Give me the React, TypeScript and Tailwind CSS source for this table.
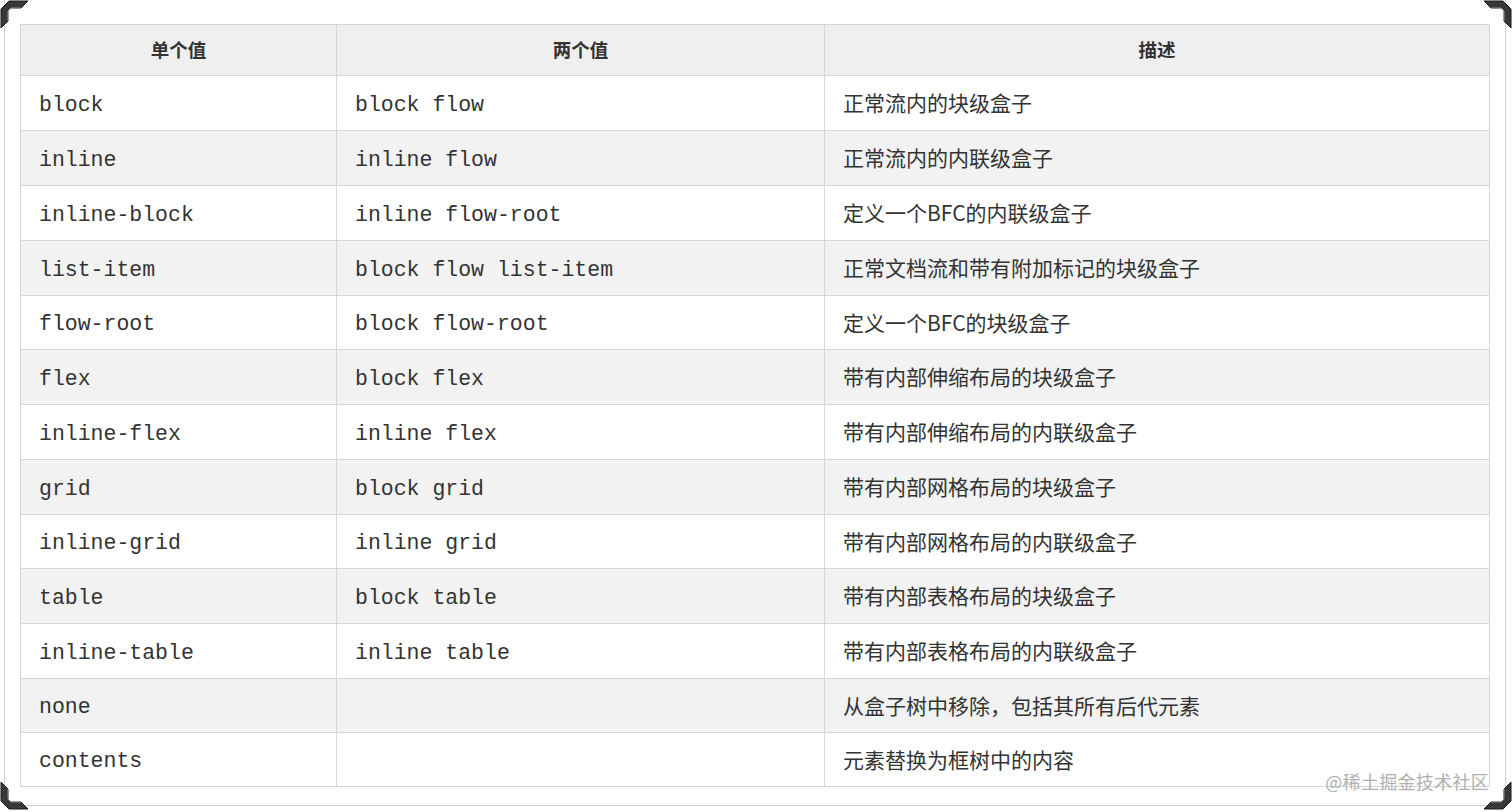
import React from "react";

const rows: [string, string, string][] = [
  ["block", "block flow", "正常流内的块级盒子"],
  ["inline", "inline flow", "正常流内的内联级盒子"],
  ["inline-block", "inline flow-root", "定义一个BFC的内联级盒子"],
  ["list-item", "block flow list-item", "正常文档流和带有附加标记的块级盒子"],
  ["flow-root", "block flow-root", "定义一个BFC的块级盒子"],
  ["flex", "block flex", "带有内部伸缩布局的块级盒子"],
  ["inline-flex", "inline flex", "带有内部伸缩布局的内联级盒子"],
  ["grid", "block grid", "带有内部网格布局的块级盒子"],
  ["inline-grid", "inline grid", "带有内部网格布局的内联级盒子"],
  ["table", "block table", "带有内部表格布局的块级盒子"],
  ["inline-table", "inline table", "带有内部表格布局的内联级盒子"],
  ["none", "", "从盒子树中移除，包括其所有后代元素"],
  ["contents", "", "元素替换为框树中的内容"],
];

const heights = [55, 55, 55, 55, 54, 55, 55, 55, 54, 55, 55, 54, 54];

function Corner({ className }: { className: string }) {
  return (
    <svg width="29" height="29" viewBox="0 0 29 29" className={className}>
      <polygon
        points="1,28 1,9 9,1 28,1 21,8 11,8 8,11 8,21"
        fill="#383838"
        stroke="#1a1a1a"
        strokeWidth="1"
        strokeLinejoin="round"
      />
      <polyline
        points="8,21 8,11 11,8 21,8"
        fill="none"
        stroke="#9a9a9a"
        strokeWidth="1"
      />
    </svg>
  );
}

const cjk = "font-['Noto_Sans_CJK_SC','Noto_Sans',sans-serif]";
const mono = "font-['Liberation_Mono','Courier_New',monospace]";

export default function App() {
  return (
    <div className="relative w-[1512px] h-[812px] bg-white overflow-hidden">
      <div className="ml-[4px] mr-[6px] h-[806px] border-l border-r border-b border-[#cfcfcf] pt-[24px] pl-[15px]">
        <table className="table-fixed border-collapse w-[1469px] text-[#333]">
          <colgroup>
            <col className="w-[316px]" />
            <col className="w-[488px]" />
            <col className="w-[665px]" />
          </colgroup>
          <thead>
            <tr className="h-[51px] bg-[#efefef]">
              {["单个值", "两个值", "描述"].map((h) => (
                <th
                  key={h}
                  className={`border border-[#d6d6d6] text-center align-middle font-bold text-[18.5px] ${cjk}`}
                >
                  {h}
                </th>
              ))}
            </tr>
          </thead>
          <tbody>
            {rows.map((r, i) => (
              <tr
                key={r[0]}
                className={i % 2 === 1 ? "bg-[#f2f2f2]" : "bg-white"}
                style={{ height: heights[i] }}
              >
                <td className={`border border-[#d6d6d6] pl-[18px] pt-[4px] align-middle text-[21.5px] ${mono}`}>
                  {r[0]}
                </td>
                <td className={`border border-[#d6d6d6] pl-[18px] pt-[4px] align-middle text-[21.5px] ${mono}`}>
                  {r[1]}
                </td>
                <td className={`border border-[#d6d6d6] pl-[18px] align-middle text-[21px] ${cjk}`}>
                  {r[2]}
                </td>
              </tr>
            ))}
          </tbody>
        </table>
      </div>

      <div
        className={`absolute right-[23px] top-[768px] text-[18px] text-[#b0b0b0] tracking-[0.3px] ${cjk}`}
      >
        @稀土掘金技术社区
      </div>

      <Corner className="absolute left-0 top-0" />
      <Corner className="absolute right-0 top-0 rotate-90" />
      <Corner className="absolute right-0 bottom-[2px] rotate-180" />
      <Corner className="absolute left-0 bottom-[2px] -rotate-90" />
    </div>
  );
}
